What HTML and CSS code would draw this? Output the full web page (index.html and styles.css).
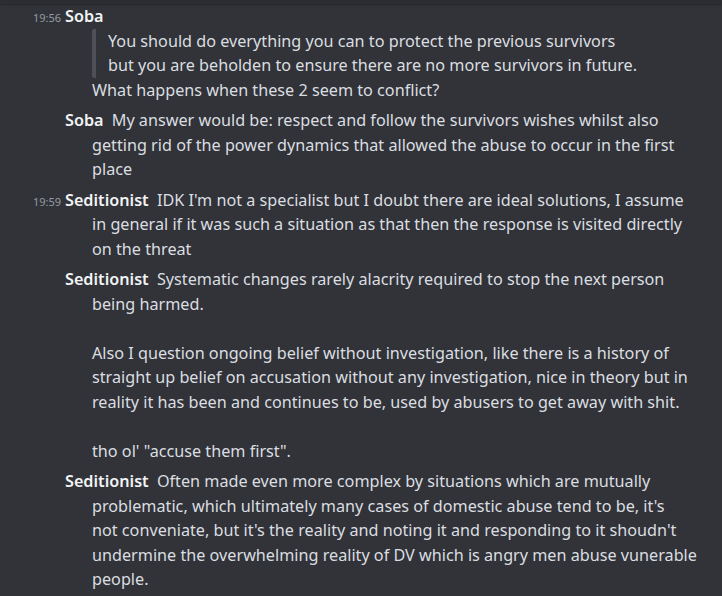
FILE: index.html
```html
<!DOCTYPE html>
<html>
<head>
<meta charset="utf-8">
<link rel="stylesheet" href="styles.css">
</head>
<body>
<div class="topbar"></div>
<div class="list">
  <div class="msg">
    <span class="ts">19:56</span><span class="user">Soba</span>
    <div class="quote">You should do everything you can to protect the previous survivors<br>but you are beholden to ensure there are no more survivors in future.</div>
    <div class="plain">What happens when these 2 seem to conflict?</div>
  </div>
  <div class="msg">
    <span class="ts hidden">19:56</span><span class="user">Soba</span> My answer would be: respect and follow the survivors wishes whilst also getting rid of the power dynamics that allowed the abuse to occur in the first place
  </div>
  <div class="msg">
    <span class="ts">19:59</span><span class="user">Seditionist</span> IDK I'm not a specialist but I doubt there are ideal solutions, I assume<br>in general if it was such a situation as that then the response is visited directly on the threat
  </div>
  <div class="msg">
    <span class="ts hidden">19:59</span><span class="user">Seditionist</span> Systematic changes rarely alacrity required to stop the next person being harmed.<br><br>Also I question ongoing belief without investigation, like there is a history of straight up belief on accusation without any investigation, nice in theory but in reality it has been and continues to be, used by abusers to get away with shit.<br><br>tho ol' "accuse them first".
  </div>
  <div class="msg">
    <span class="ts hidden">19:59</span><span class="user">Seditionist</span> Often made even more complex by situations which are mutually problematic, which ultimately many cases of domestic abuse tend to be, it's<br>not conveniate, but it's the reality and noting it and responding to it shoudn't undermine the overwhelming reality of DV which is angry men abuse vunerable people.
  </div>
</div>
</body>
</html>
```
FILE: styles.css
```css
html, body {
  margin: 0;
  padding: 0;
  background: #313338;
  height: 100%;
  overflow: hidden;
}
body {
  font-family: "Noto Sans", "Open Sans", sans-serif;
  font-size: 16.2px;
  color: #dbdee1;
  position: relative;
}
.topbar {
  position: absolute;
  top: 0;
  left: 0;
  right: 0;
  height: 4px;
  background: #2b2d31;
  box-shadow: 0 1px 2px rgba(0,0,0,0.25);
  z-index: 2;
}
.list {
  padding-top: 1px;
  padding-right: 18px;
}
.msg {
  padding: 3px 0 3px 92px;
  text-indent: -59px;
  line-height: 24.5px;
}
.ts {
  display: inline-block;
  width: 32px;
  text-indent: 0;
  font-size: 11px;
  line-height: 11px;
  color: #949ba4;
}
.ts.hidden {
  visibility: hidden;
}
.user {
  font-weight: 600;
  color: #f2f3f5;
  margin-right: 4px;
}
.quote {
  text-indent: 0;
  border-left: 4px solid #4e5058;
  border-radius: 2px;
  padding-left: 12px;
}
.plain {
  text-indent: 0;
}
```
